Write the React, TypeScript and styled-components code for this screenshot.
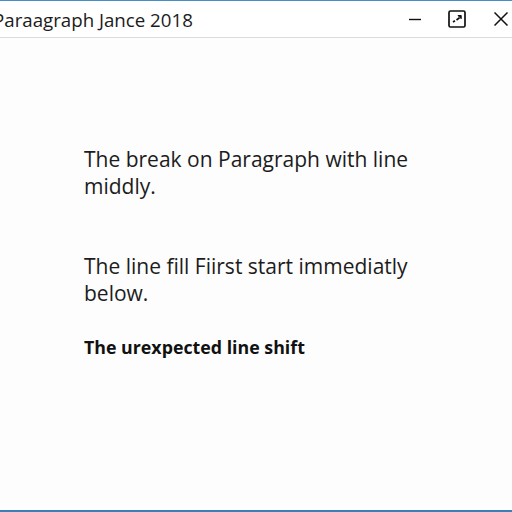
import React from "react";
import styled, { createGlobalStyle } from "styled-components";

const Global = createGlobalStyle`
  html, body { margin: 0; padding: 0; background: #ffffff; }
  body { width: 512px; height: 512px; overflow: hidden; }
`;

const Window = styled.div`
  width: 512px;
  height: 512px;
  box-sizing: border-box;
  border-top: 1px solid #4a8fc4;
  border-bottom: 2px solid #3d7fb8;
  background: #fdfdfd;
  display: flex;
  flex-direction: column;
  font-family: "Open Sans", "Noto Sans", sans-serif;
  color: #1a1a1a;
  overflow: hidden;
`;

const TitleBar = styled.div`
  height: 36px;
  flex: none;
  display: flex;
  align-items: center;
  border-bottom: 1px solid #dcdcdc;
  background: #ffffff;
  overflow: hidden;
`;

const Title = styled.div`
  flex: 1;
  margin-left: -7px;
  font-size: 18.7px;
  color: #1b1b1b;
  white-space: nowrap;
`;

const Controls = styled.div`
  display: flex;
  align-items: center;
  height: 100%;
`;

const CtrlButton = styled.div<{ $w: number; $end?: boolean }>`
  width: ${(p) => p.$w}px;
  height: 100%;
  box-sizing: border-box;
  display: flex;
  align-items: center;
  justify-content: ${(p) => (p.$end ? "flex-end" : "center")};
  padding-right: ${(p) => (p.$end ? 4 : 0)}px;
`;

const Content = styled.div`
  flex: 1;
  padding: 108px 0 0 84px;
  display: flex;
  flex-direction: column;
`;

const Para = styled.p<{ $gap: number }>`
  margin: 0 0 ${(p) => p.$gap}px 0;
  width: 345px;
  font-size: 21px;
  line-height: 27px;
  color: #1c1c1c;
`;

const BoldLine = styled.p`
  margin: 0;
  font-size: 17.8px;
  font-weight: 700;
  line-height: 24px;
  color: #111;
`;

export default function App() {
  return (
    <>
      <Global />
      <Window>
        <TitleBar>
          <Title>Paraagraph Jance 2018</Title>
          <Controls>
            <CtrlButton $w={42}>
              <svg width="12" height="12" viewBox="0 0 12 12">
                <path d="M0 6.5h12" stroke="#111" strokeWidth="1.4" />
              </svg>
            </CtrlButton>
            <CtrlButton $w={42}>
              <svg width="18" height="18" viewBox="0 0 18 18">
                <rect x="1" y="1" width="16" height="16" rx="1.5" fill="none" stroke="#111" strokeWidth="1.7" />
                <path d="M5 12l2-1.2M8.5 10l3-2.2" stroke="#111" strokeWidth="1.7" />
                <path d="M10 5.5h3.2v3.2z" fill="#111" stroke="#111" strokeWidth="1" />
              </svg>
            </CtrlButton>
            <CtrlButton $w={34} $end>
              <svg width="14" height="14" viewBox="0 0 14 14">
                <path d="M0.5 0.5l13 13M13.5 0.5l-13 13" stroke="#111" strokeWidth="1.5" />
              </svg>
            </CtrlButton>
          </Controls>
        </TitleBar>
        <Content>
          <Para $gap={53}>The break on Paragraph with line middly.</Para>
          <Para $gap={28}>The line fill Fiirst start immediatly below.</Para>
          <BoldLine>The urexpected line shift</BoldLine>
        </Content>
      </Window>
    </>
  );
}
